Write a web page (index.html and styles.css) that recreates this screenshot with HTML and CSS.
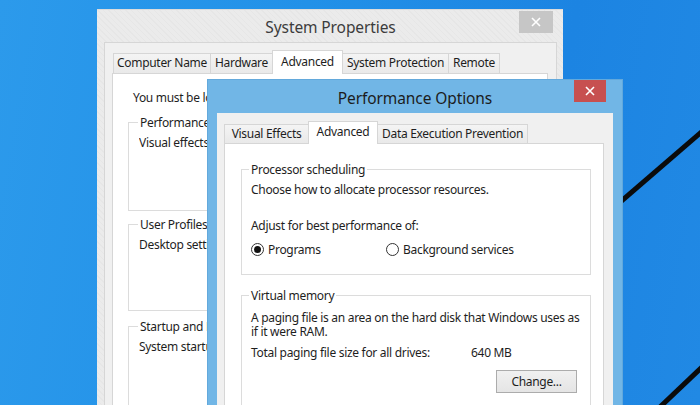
FILE: index.html
```html
<!DOCTYPE html>
<html>
<head>
<meta charset="utf-8">
<link rel="stylesheet" href="styles.css">
</head>
<body>
<div class="desktop">
  <svg class="wallpaper" width="700" height="405" viewBox="0 0 700 405">
    <line x1="560" y1="254" x2="720" y2="116" stroke="#0b0b0b" stroke-width="5"/>
    <line x1="640" y1="426" x2="720" y2="350" stroke="#0b0b0b" stroke-width="5"/>
  </svg>

  <div class="win sys">
    <div class="titlebar">
      <span class="title">System Properties</span>
      <span class="close close-gray"><svg width="10" height="10" viewBox="0 0 10 10"><path d="M1 1L9 9M9 1L1 9" stroke="#fff" stroke-width="1.6"/></svg></span>
    </div>
    <div class="client sys-client">
      <div class="tabs sys-tabs">
        <div class="tab t-cn">Computer Name</div>
        <div class="tab t-hw">Hardware</div>
        <div class="tab active t-adv">Advanced</div>
        <div class="tab t-sp">System Protection</div>
        <div class="tab t-rm">Remote</div>
      </div>
      <div class="panel sys-panel">
        <div class="note clip">You must be logged on as an Administrator to make most of these changes.</div>
        <div class="group g-perf">
          <div class="glabel clip">Performance</div>
          <div class="gtext clip">Visual effects, processor scheduling, memory usage, and virtual memory</div>
        </div>
        <div class="group g-prof">
          <div class="glabel clip">User Profiles</div>
          <div class="gtext clip">Desktop settings related to your sign-in</div>
        </div>
        <div class="group g-start">
          <div class="glabel clip">Startup and Recovery</div>
          <div class="gtext clip">System startup, system failure, and debugging information</div>
        </div>
      </div>
    </div>
  </div>

  <div class="win perf">
    <div class="titlebar perf-title">
      <span class="title">Performance Options</span>
      <span class="close close-red"><svg width="10" height="10" viewBox="0 0 10 10"><path d="M1 1L9 9M9 1L1 9" stroke="#fff" stroke-width="1.6"/></svg></span>
    </div>
    <div class="client perf-client">
      <div class="tabs perf-tabs">
        <div class="tab t-ve">Visual Effects</div>
        <div class="tab active t-adv2">Advanced</div>
        <div class="tab t-dep">Data Execution Prevention</div>
      </div>
      <div class="panel perf-panel">
        <div class="group g-proc">
          <div class="glabel">Processor scheduling</div>
          <div class="line l-choose">Choose how to allocate processor resources.</div>
          <div class="line l-adjust">Adjust for best performance of:</div>
          <div class="radios">
            <div class="radio-item"><span class="radio checked"></span><span>Programs</span></div>
            <div class="radio-item"><span class="radio"></span><span>Background services</span></div>
          </div>
        </div>
        <div class="group g-vm">
          <div class="glabel">Virtual memory</div>
          <div class="line l-paging">A paging file is an area on the hard disk that Windows uses as<br>if it were RAM.</div>
          <div class="line l-total"><span class="total-label">Total paging file size for all drives:</span><span>640 MB</span></div>
          <div class="btn-row"><span class="btn">Change...</span></div>
        </div>
      </div>
    </div>
  </div>
</div>
</body>
</html>
```
FILE: styles.css
```css
html, body {
  margin: 0;
  padding: 0;
}
body {
  width: 700px;
  height: 405px;
  overflow: hidden;
  font-family: "Noto Sans", "Open Sans", sans-serif;
  font-size: 12px;
  letter-spacing: -0.3px;
  color: #1e1e1e;
}
.desktop {
  position: relative;
  width: 700px;
  height: 405px;
  overflow: hidden;
  background: linear-gradient(100deg, #2c9aeb 0%, #2291e8 40%, #1c84e2 75%, #2189e4 100%);
}
.wallpaper {
  position: absolute;
  left: 0;
  top: 0;
}

/* windows */
.win {
  position: absolute;
  box-sizing: border-box;
  display: flex;
  flex-direction: column;
}
.titlebar {
  position: relative;
  flex: none;
  display: flex;
  align-items: center;
  justify-content: center;
}
.title {
  font-size: 15.5px;
  letter-spacing: -0.1px;
}
.close {
  position: absolute;
  top: 1px;
  height: 22px;
  display: flex;
  align-items: center;
  justify-content: center;
}
.close svg { display: block; }

.sys {
  left: 97px;
  top: 9px;
  width: 466px;
  height: 420px;
  padding: 0 6px 0 7px;
  background-color: #ebebeb;
  background-image: repeating-linear-gradient(45deg, rgba(0,0,0,0.018) 0 1px, transparent 1px 4px);
  border-top: 1px solid #dcdcdc;
}
.sys .titlebar {
  height: 32px;
}
.sys .title {
  color: #3c3c3c;
  padding-top: 2px;
}
.close-gray {
  right: 4px;
  width: 34px;
  background: #c6c6c6;
}

.perf {
  left: 207px;
  top: 79px;
  width: 416px;
  height: 340px;
  padding: 0 9px;
  background: #71b6e6;
  border: 1px solid #63a9dc;
}
.perf .titlebar {
  height: 33px;
}
.perf .title {
  color: #1c1c1c;
  padding-top: 2px;
}
.close-red {
  right: 7px;
  top: 0;
  width: 32px;
  background: #c75050;
}

.client {
  flex: 1;
  display: flex;
  flex-direction: column;
  background: #f0f0f0;
}
.sys-client {
  border: 1px solid #d6d6d6;
  padding: 7px 8px 0 7px;
}
.perf-client {
  padding: 8px 9px 0 7px;
}

/* tabs */
.tabs {
  display: flex;
  align-items: flex-end;
  height: 23px;
  flex: none;
}
.sys-tabs { padding-left: 1px; }
.perf-tabs { height: 22px; }
.tab {
  box-sizing: border-box;
  height: 20px;
  line-height: 18px;
  padding: 0;
  text-align: center;
  border: 1px solid #d6d6d6;
  border-bottom: none;
  margin-right: -1px;
  background: linear-gradient(#f4f4f4, #e9e9e9);
  white-space: nowrap;
}
.perf-tabs .tab { height: 19px; line-height: 17px; }
.tab.active {
  height: 24px;
  line-height: 21px;
  background: #fff;
  position: relative;
  z-index: 1;
  margin-bottom: -1px;
}
.perf-tabs .tab.active { height: 23px; line-height: 20px; }
.t-cn { width: 98px; }
.t-hw { width: 63px; }
.t-adv { width: 71px; }
.t-sp { width: 107px; }
.t-rm { width: 52px; }
.t-ve { width: 85px; }
.t-adv2 { width: 70px; }
.t-dep { width: 151px; }

.panel {
  flex: 1;
  background: #fff;
  border: 1px solid #d6d6d6;
}

/* groups */
.group {
  border: 1px solid #dcdcdc;
  box-sizing: border-box;
}
.glabel {
  display: block;
  width: fit-content;
  line-height: 15px;
  margin-top: -8px;
  padding: 0 2px;
  background: #fff;
  white-space: nowrap;
}
.gtext { white-space: nowrap; margin-top: 5px; line-height: 15px; }

.sys-panel {
  padding: 16px 0 0 15px;
}
.note {
  line-height: 15px;
  padding-left: 5px;
  white-space: nowrap;
}
.clip {
  overflow: hidden;
}
.note.clip { width: 74px; }
.sys-panel .gtext.clip { width: 68px; }
.sys-panel .glabel.clip { max-width: 68px; }
.sys-panel .group {
  padding-left: 10px;
  margin-right: 12px;
}
.sys-panel .glabel { margin-left: -1px; }
.g-perf { margin-top: 17px; height: 89px; }
.g-prof { margin-top: 13px; height: 87px; }
.g-start { margin-top: 15px; height: 120px; }

.perf-panel {
  padding: 0 12px 0 16px;
}
.perf-panel .group {
  padding-left: 9px;
}
.perf-panel .glabel { margin-left: -2px; }
.g-proc { margin-top: 25px; height: 106px; }
.g-vm { margin-top: 20px; height: 112px; padding-right: 13px; }
.line { line-height: 15px; white-space: nowrap; }
.l-choose { margin-top: 5px; }
.l-adjust { margin-top: 21px; }
.radios {
  display: grid;
  grid-template-columns: 135px auto;
  margin-top: 9px;
  line-height: 15px;
}
.radio-item {
  display: flex;
  align-items: center;
  gap: 4px;
}
.radio {
  box-sizing: border-box;
  width: 13px;
  height: 13px;
  border-radius: 50%;
  border: 1px solid #333;
  background: #fff;
  display: flex;
  align-items: center;
  justify-content: center;
}
.radio.checked::after {
  content: "";
  width: 7px;
  height: 7px;
  border-radius: 50%;
  background: #111;
}
.l-paging { margin-top: 8px; line-height: 14px; }
.l-total { margin-top: 6px; display: flex; }
.total-label { width: 220px; }
.btn-row {
  display: flex;
  justify-content: flex-end;
  margin-top: 10px;
}
.btn {
  box-sizing: border-box;
  width: 81px;
  height: 23px;
  line-height: 21px;
  text-align: center;
  border: 1px solid #acacac;
  background: linear-gradient(#f0f0f0, #e5e5e5);
}
```
